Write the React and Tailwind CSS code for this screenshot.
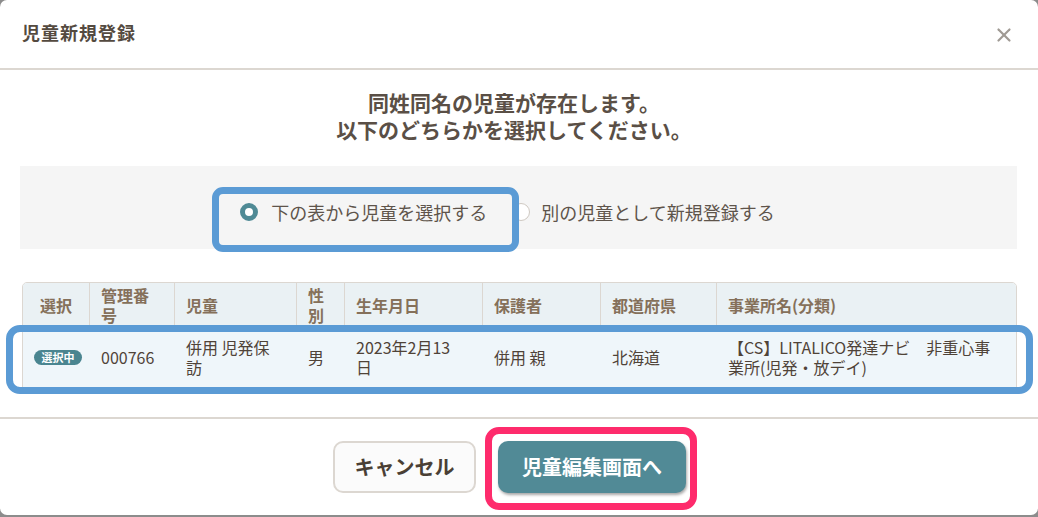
import { X } from 'lucide-react';

const columns = [
    { label: '選択', w: 'w-[67px]' },
    { label: <>管理番<br />号</>, w: 'w-[85px]' },
    { label: '児童', w: 'w-[122px]' },
    { label: <>性<br />別</>, w: 'w-[48px]' },
    { label: '生年月日', w: 'w-[138px]' },
    { label: '保護者', w: 'w-[118px]' },
    { label: '都道府県', w: 'w-[116px]' },
    { label: '事業所名(分類)', w: 'flex-1' },
];

function Radio({ checked }) {
    return checked ? (
        <span className="w-[18px] h-[18px] rounded-full border-[5px] border-[#4f8a95] bg-white shrink-0" />
    ) : (
        <span className="w-[18px] h-[18px] rounded-full border border-[#cfc9c2] bg-white shrink-0" />
    );
}

export default function App() {
    return (
        <div
            className="relative w-[1038px] h-[517px] bg-[#8c8c8c] overflow-hidden"
            style={{ fontFamily: '"Noto Sans CJK JP", "Noto Sans", sans-serif' }}
        >
            <div className="w-full h-[515px] bg-white rounded-[7px] flex flex-col">
                {/* header */}
                <div className="h-[70px] shrink-0 flex items-center justify-between pl-[22px] pr-[23px] pb-[4px] border-b-2 border-[#dcd7d1]">
                    <h2 className="text-[18px] font-bold text-[#544a40] tracking-[1px]">児童新規登録</h2>
                    <X size={22} strokeWidth={2.4} className="text-[#a09a94] mt-[6px]" />
                </div>

                {/* message */}
                <div className="pt-[19px] text-center text-[21px] leading-[27px] font-bold text-[#5a4f46] pr-[10px]">
                    <p>同姓同名の児童が存在します。</p>
                    <p>以下のどちらかを選択してください。</p>
                </div>

                {/* options */}
                <div className="mt-[23px] ml-[20px] mr-[21px] h-[83px] bg-[#f5f5f5] flex items-center justify-center pr-[22px] pt-[9px]">
                    <label className="flex items-center gap-[13px]">
                        <Radio checked />
                        <span className="text-[18px] text-[#5e544b]">下の表から児童を選択する</span>
                    </label>
                    <label className="flex items-center gap-[11px] ml-[25px]">
                        <Radio />
                        <span className="text-[18px] text-[#5e544b]">別の児童として新規登録する</span>
                    </label>
                </div>

                {/* table */}
                <div className="mt-[33px] ml-[22px] mr-[21px] border border-[#dcd7d1] rounded-t-[5px] overflow-hidden">
                    <div className="flex h-[44px] bg-[#eaf1f4] text-[16px] leading-[20px] font-bold text-[#85705a]">
                        {columns.map((c, i) => (
                            <div
                                key={i}
                                className={`${c.w} flex items-center ${i === 0 ? 'justify-center' : 'px-[11px]'} ${i < columns.length - 1 ? 'border-r border-[#dcd7d1]' : ''}`}
                            >
                                <span>{c.label}</span>
                            </div>
                        ))}
                    </div>
                    <div className="flex h-[60px] bg-[#eff6fa] text-[16px] leading-[20px] text-[#4f4338]">
                        <div className="w-[67px] flex items-center justify-center pl-[3px]">
                            <span className="w-[48px] h-[15px] rounded-full bg-[#4a8590] text-white text-[11px] font-bold leading-[15px] text-center">選択中</span>
                        </div>
                        <div className="w-[85px] flex items-center px-[11px]">000766</div>
                        <div className="w-[122px] flex items-center px-[11px]"><span>併用 児発保<br />訪</span></div>
                        <div className="w-[48px] flex items-center px-[11px]">男</div>
                        <div className="w-[138px] flex items-center px-[11px]"><span>2023年2月13<br />日</span></div>
                        <div className="w-[118px] flex items-center px-[11px]">併用 親</div>
                        <div className="w-[116px] flex items-center px-[11px]">北海道</div>
                        <div className="flex-1 flex items-center px-[11px]"><span>【CS】LITALICO発達ナビ　非重心事<br />業所(児発・放デイ)</span></div>
                    </div>
                </div>

                {/* footer */}
                <div className="mt-[29px] border-t-2 border-[#dcd7d1] pt-[22px] flex justify-center gap-[22px] pr-[19px]">
                    <button className="w-[143px] h-[52px] rounded-[10px] border-2 border-[#dcd7d1] bg-[#fbfbfb] text-[20px] font-bold text-[#4a3f35]">
                        キャンセル
                    </button>
                    <button className="w-[188px] h-[52px] rounded-[10px] bg-[#518a96] text-[20px] font-bold text-white shadow-[1px_2px_3px_rgba(0,0,0,0.35)]">
                        児童編集画面へ
                    </button>
                </div>
            </div>

            {/* annotation highlights */}
            <div className="absolute left-[212px] top-[187px] w-[307px] h-[65px] border-[7px] border-[#5b9bd5] rounded-[11px]" />
            <div className="absolute left-[6px] top-[325px] w-[1027px] h-[69px] border-[7px] border-[#5b9bd5] rounded-[14px]" />
            <div className="absolute left-[485px] top-[427px] w-[212px] h-[83px] border-[7px] border-[#fe2b6c] rounded-[14px]" />
        </div>
    );
}
